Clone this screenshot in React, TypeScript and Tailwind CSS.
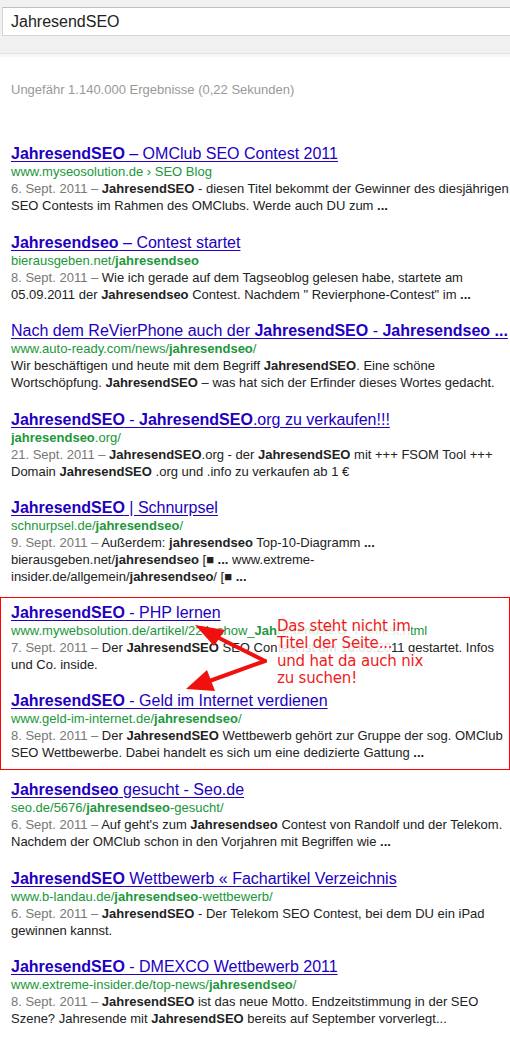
import type { ReactNode } from "react";

interface ResultProps {
    title: ReactNode;
    url: ReactNode;
    date: string;
    lines: ReactNode[];
    last?: boolean;
}

const B = ({ children }: { children: ReactNode }) => <b className="font-bold">{children}</b>;

const Result = (props: ResultProps) => {
    const { title, url, date, lines, last } = props;
    return (
        <div className={last ? "" : "mb-[18.5px]"}>
            <div className="text-[16px] leading-[19px] whitespace-nowrap">
                <a href="#" className="text-[#2200c1] underline underline-offset-[2px]">
                    {title}
                </a>
            </div>
            <div className="text-[13px] leading-[17px] text-[#20973a] whitespace-nowrap">{url}</div>
            <div className="text-[13px] leading-[17px] text-[#222] whitespace-nowrap">
                {lines.map((line, i) => (
                    <div key={i}>
                        {i === 0 && <span className="text-[#777]">{date} – </span>}
                        {line}
                    </div>
                ))}
            </div>
        </div>
    );
};

const Arrows = () => (
    <svg
        className="absolute left-0 top-0 pointer-events-none"
        width="510"
        height="120"
        viewBox="0 0 510 120"
    >
        <g fill="#f01010" stroke="#f01010" strokeLinecap="round">
            <line x1="264" y1="63" x2="210" y2="36" strokeWidth="4" />
            <polygon points="194,27 224,32 213,48" stroke="none" />
            <line x1="264" y1="63" x2="203" y2="85" strokeWidth="4" />
            <polygon points="185,91 206,72 214,93" stroke="none" />
        </g>
    </svg>
);

export default function App() {
    return (
        <div className="w-[510px] min-h-[1038px] bg-white font-['Liberation_Sans',Arial,sans-serif] overflow-hidden">
            {/* Suchleiste */}
            <div className="h-[54px] bg-[#f1f1f1] border-b border-[#e2e2e2] pt-[7px] pl-[2px]">
                <div className="h-[29px] w-[520px] bg-white border border-[#d4d4d4] border-t-[#c0c0c0] flex items-center pl-[8px] text-[16px] text-[#222]">
                    JahresendSEO
                </div>
            </div>
            <div className="h-[3px] bg-[#f7f7f7]" />

            <div className="px-[11px] pt-[24px] text-[13px] leading-[17px] text-[#999]">
                Ungefähr 1.140.000 Ergebnisse (0,22 Sekunden)
            </div>

            <div className="pt-[46px] px-[11px]">
                <Result
                    title={<><B>JahresendSEO</B> – OMClub SEO Contest 2011</>}
                    url={<>www.myseosolution.de › SEO Blog</>}
                    date="6. Sept. 2011"
                    lines={[
                        <><B>JahresendSEO</B> - diesen Titel bekommt der Gewinner des diesjährigen</>,
                        <>SEO Contests im Rahmen des OMClubs. Werde auch DU zum <B>...</B></>,
                    ]}
                />
                <Result
                    title={<><B>Jahresendseo</B> – Contest startet</>}
                    url={<>bierausgeben.net/<B>jahresendseo</B></>}
                    date="8. Sept. 2011"
                    lines={[
                        <>Wie ich gerade auf dem Tagseoblog gelesen habe, startete am</>,
                        <>05.09.2011 der <B>Jahresendseo</B> Contest. Nachdem " Revierphone-Contest" im <B>...</B></>,
                    ]}
                />
                <div className="mb-[18.5px]">
                    <div className="text-[16px] leading-[19px] whitespace-nowrap">
                        <a href="#" className="text-[#2200c1] underline underline-offset-[2px]">
                            Nach dem ReVierPhone auch der <B>JahresendSEO</B> - <B>Jahresendseo ...</B>
                        </a>
                    </div>
                    <div className="text-[13px] leading-[17px] text-[#20973a] whitespace-nowrap">
                        www.auto-ready.com/news/<B>jahresendseo</B>/
                    </div>
                    <div className="text-[13px] leading-[17px] text-[#222] whitespace-nowrap">
                        <div>Wir beschäftigen und heute mit dem Begriff <B>JahresendSEO</B>. Eine schöne</div>
                        <div>Wortschöpfung. <B>JahresendSEO</B> – was hat sich der Erfinder dieses Wortes gedacht.</div>
                    </div>
                </div>
                <Result
                    title={<><B>JahresendSEO</B> - <B>JahresendSEO</B>.org zu verkaufen!!!</>}
                    url={<><B>jahresendseo</B>.org/</>}
                    date="21. Sept. 2011"
                    lines={[
                        <><B>JahresendSEO</B>.org - der <B>JahresendSEO</B> mit +++ FSOM Tool +++</>,
                        <>Domain <B>JahresendSEO</B> .org und .info zu verkaufen ab 1 €</>,
                    ]}
                />
                <Result
                    title={<><B>JahresendSEO</B> | Schnurpsel</>}
                    url={<>schnurpsel.de/<B>jahresendseo</B>/</>}
                    date="9. Sept. 2011"
                    lines={[
                        <>Außerdem: <B>jahresendseo</B> Top-10-Diagramm <B>...</B></>,
                        <>bierausgeben.net/<B>jahresendseo</B> [<B>■ ...</B> www.extreme-</>,
                        <>insider.de/allgemein/<B>jahresendseo</B>/ [<B>■ ...</B></>,
                    ]}
                />
            </div>

            {/* markierter Bereich */}
            <div className="relative -mt-[7px] mb-[10px] border border-[#f00] pt-[5px] pb-[8px] px-[10px]">
                <Result
                    title={<><B>JahresendSEO</B> - PHP lernen</>}
                    url={<>www.mywebsolution.de/artikel/224_show_<B>JahresendSEO</B>_Contest.html</>}
                    date="7. Sept. 2011"
                    lines={[
                        <>Der <B>JahresendSEO</B> SEO Contest ist am 16.09.2011 gestartet. Infos</>,
                        <>und Co. inside.</>,
                    ]}
                />
                <Result
                    last
                    title={<><B>JahresendSEO</B> - Geld im Internet verdienen</>}
                    url={<>www.geld-im-internet.de/<B>jahresendseo</B>/</>}
                    date="8. Sept. 2011"
                    lines={[
                        <>Der <B>JahresendSEO</B> Wettbewerb gehört zur Gruppe der sog. OMClub</>,
                        <>SEO Wettbewerbe. Dabei handelt es sich um eine dedizierte Gattung <B>...</B></>,
                    ]}
                />
                <Arrows />
                <div className="absolute left-[276px] top-[20px] font-['DejaVu_Sans',Verdana,sans-serif] text-[15px] leading-[17.5px] tracking-[-0.2px] text-[#f01a1a] whitespace-nowrap">
                    <div><span className="bg-white/85">Das steht nicht im</span></div>
                    <div><span className="bg-white/85">Titel der Seite...</span></div>
                    <div><span className="bg-white/85">und hat da auch nix</span></div>
                    <div><span className="bg-white/85">zu suchen!</span></div>
                </div>
            </div>

            <div className="px-[11px]">
                <Result
                    title={<><B>Jahresendseo</B> gesucht - Seo.de</>}
                    url={<>seo.de/5676/<B>jahresendseo</B>-gesucht/</>}
                    date="6. Sept. 2011"
                    lines={[
                        <>Auf geht's zum <B>Jahresendseo</B> Contest von Randolf und der Telekom.</>,
                        <>Nachdem der OMClub schon in den Vorjahren mit Begriffen wie <B>...</B></>,
                    ]}
                />
                <Result
                    title={<><B>JahresendSEO</B> Wettbewerb « Fachartikel Verzeichnis</>}
                    url={<>www.b-landau.de/<B>jahresendseo</B>-wettbewerb/</>}
                    date="6. Sept. 2011"
                    lines={[
                        <><B>JahresendSEO</B> - Der Telekom SEO Contest, bei dem DU ein iPad</>,
                        <>gewinnen kannst.</>,
                    ]}
                />
                <Result
                    title={<><B>JahresendSEO</B> - DMEXCO Wettbewerb 2011</>}
                    url={<>www.extreme-insider.de/top-news/<B>jahresendseo</B>/</>}
                    date="8. Sept. 2011"
                    lines={[
                        <><B>JahresendSEO</B> ist das neue Motto. Endzeitstimmung in der SEO</>,
                        <>Szene? Jahresende mit <B>JahresendSEO</B> bereits auf September vorverlegt...</>,
                    ]}
                />
            </div>
        </div>
    );
}
